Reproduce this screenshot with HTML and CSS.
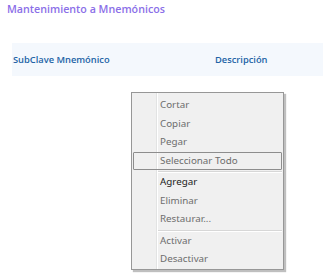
FILE: index.html
```html
<!DOCTYPE html>
<html lang="es">
<head>
    <meta charset="UTF-8">
    <meta name="viewport" content="width=device-width, initial-scale=1.0">
    <title>Mantenimiento a Mnemónicos</title>
    <link rel="stylesheet" href="styles.css">
</head>
<body>
    <h1 class="page-title">Mantenimiento a Mnemónicos</h1>

    <!-- Grid header -->
    <div class="grid-header">
        <div class="col col-key">SubClave Mnemónico</div>
        <div class="col col-desc">Descripción</div>
    </div>

    <!-- Context menu -->
    <ul class="context-menu">
        <li class="menu-item disabled">Cortar</li>
        <li class="menu-item disabled">Copiar</li>
        <li class="menu-item disabled">Pegar</li>
        <li class="menu-item disabled hover">Seleccionar Todo</li>
        <li class="menu-sep"></li>
        <li class="menu-item">Agregar</li>
        <li class="menu-item disabled">Eliminar</li>
        <li class="menu-item disabled">Restaurar...</li>
        <li class="menu-sep"></li>
        <li class="menu-item disabled">Activar</li>
        <li class="menu-item disabled">Desactivar</li>
    </ul>
</body>
</html>
```

FILE: styles.css
```css
/* Global styles */
body {
    font-family: 'Open Sans', 'Noto Sans', sans-serif;
    margin: 0;
    padding: 0;
    background: #fff;
    color: #333;
    position: relative;
    height: 280px;
}

.page-title {
    margin: 0;
    padding: 1px 0 0 7px;
    font-size: 10.7px;
    font-weight: 600;
    color: #8b6fe8;
    line-height: 17px;
}

/* Grid header */
.grid-header {
    display: flex;
    align-items: center;
    margin: 25px 0 0 12px;
    height: 33px;
    background-color: #f4f8fd;
}

.grid-header .col {
    font-size: 9.3px;
    font-weight: 600;
    color: #2263a6;
}

.col-key {
    width: 202px;
    padding-left: 1px;
}

/* Context menu */
.context-menu {
    position: absolute;
    left: 131px;
    top: 92px;
    width: 151px;
    margin: 0;
    padding: 3px 0 0 0;
    list-style: none;
    background: #f0f0f0;
    border: 1px solid #979797;
    box-shadow: 2px 2px 1px rgba(0, 0, 0, 0.25);
    font-family: 'Noto Sans', 'Open Sans', sans-serif;
    font-size: 9.8px;
}

.context-menu::before {
    content: "";
    position: absolute;
    left: 24px;
    top: 0;
    bottom: 0;
    width: 1px;
    background: #e2e3e3;
    border-right: 1px solid #fff;
}

.menu-item {
    position: relative;
    height: 18.5px;
    line-height: 18.5px;
    margin: 0 1px;
    padding-left: 27px;
    color: #1a1a1a;
}

.menu-item.disabled {
    color: #6d6d6d;
}

.menu-item.hover {
    padding-left: 26px;
    border: 1px solid #8d8d8d;
    border-radius: 1px;
    height: 16.5px;
    line-height: 16.5px;
    z-index: 1;
}

.menu-sep {
    height: 1px;
    margin: 1px 1px 0 26px;
    background: #d7d7d7;
    border-bottom: 1px solid #fff;
}
```
